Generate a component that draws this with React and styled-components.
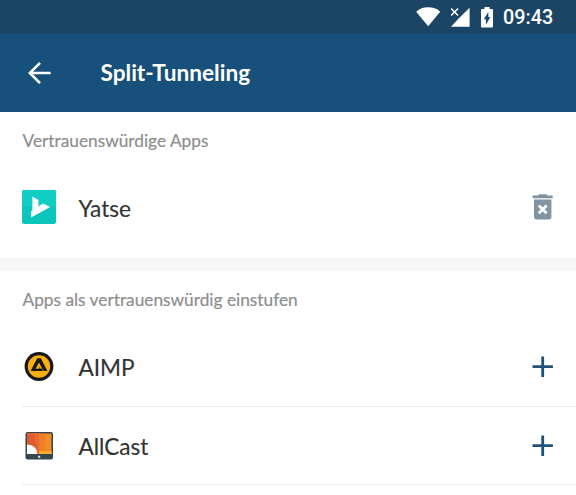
import styled, { createGlobalStyle } from "styled-components";

const GlobalStyle = createGlobalStyle`
  * {
    box-sizing: border-box;
  }
  body {
    margin: 0;
    background-color: #fff;
    font-family: Lato, "Liberation Sans", sans-serif;
  }
`;

const Screen = styled.div`
  width: 576px;
  height: 495px;
  overflow: hidden;
  background-color: #fff;
`;
const StatusBar = styled.div`
  height: 34px;
  padding-right: 23px;
  display: flex;
  align-items: center;
  justify-content: flex-end;
  background-color: #1b4564;
  color: #fff;
`;
const StatusIcons = styled.div`
  width: 77px;
  display: flex;
  align-items: center;
  justify-content: space-between;
  margin-right: 10px;
`;
const Clock = styled.span`
  width: 50px;
  padding-top: 2px;
  font-family: Roboto, sans-serif;
  font-size: 19.8px;
  font-weight: 500;
  line-height: 34px;
`;
const Header = styled.header`
  height: 78px;
  padding-left: 28px;
  display: flex;
  align-items: center;
  gap: 49.5px;
  background-color: #17507a;
  color: #fff;
`;
const Title = styled.h1`
  margin: 0;
  font-size: 22.6px;
  font-weight: 700;
  line-height: 28px;
`;
const Section = styled.section`
  height: ${(props) => props.$height || "auto"};
  padding-left: 22px;
`;
const SectionTitle = styled.h2`
  margin: 0;
  height: 57px;
  padding-left: 0.5px;
  color: #8e8e8e;
  font-size: 17.3px;
  font-weight: 400;
  line-height: 57px;
  -webkit-text-stroke: 0.2px #8e8e8e;
`;
const Row = styled.div`
  height: ${(props) => props.$height};
  padding-right: 22px;
  display: flex;
  align-items: center;
  border-bottom: ${(props) => (props.$divided ? "1px solid #ebebeb" : "none")};
`;
const AppIcon = styled.div`
  width: 34px;
  height: 34px;
  margin-right: 22.5px;
  flex: none;

  svg {
    display: block;
  }
`;
const AppName = styled.span`
  flex: 1;
  padding-top: ${(props) => props.$offset || "2px"};
  color: #333;
  font-size: 22.6px;
  line-height: 30px;
  -webkit-text-stroke: 0.15px #333;
`;
const Action = styled.button`
  width: 22px;
  height: 28px;
  padding: 0;
  display: flex;
  align-items: center;
  justify-content: center;
  border: none;
  background: none;
`;
const Spacer = styled.div`
  height: 13px;
  background: linear-gradient(#f5f5f5, #f8f8f8);
`;

const WifiIcon = () => (
  <svg width="24" height="20" viewBox="0 0 24 20" fill="#fff">
    <path d="M.2 4.7Q5 .3 12.2 .3t12 4.4L12.2 19.3Z" />
  </svg>
);

const SignalIcon = () => (
  <svg width="20" height="20" viewBox="1 0 20 20">
    <path d="M19.6.8v19H.9l7.7-8.2Z" fill="#fff" />
    <path d="M1.1 1.5l7 7M8.1 1.5l-7 7" stroke="#fff" strokeWidth="1.4" />
  </svg>
);

const BatteryIcon = () => (
  <svg width="12" height="21" viewBox="0 0 12 21">
    <path
      d="M3.5 0h5v2H11q1 0 1 1v16.5q0 1-1 1H1q-1 0-1-1V3q0-1 1-1h2.5Z"
      fill="#fff"
    />
    <path d="M7.3 5v5h2L4.9 17.8v-5.5H2.8Z" fill="#1b4564" />
  </svg>
);

const BackIcon = () => (
  <svg
    width="23"
    height="23"
    viewBox="0 0 23 23"
    fill="none"
    stroke="#fff"
    strokeWidth="2.6"
  >
    <path d="M12 .9 1.8 11 12 21.1M1.8 11h20.8" />
  </svg>
);

const YatseIcon = () => (
  <svg width="34" height="34" viewBox="0 0 34 34">
    <rect width="34" height="34" rx="2.2" fill="#0bc6bd" />
    <path d="M2.2 0h29.6Q34 0 34 2.2V16H0V2.2Q0 0 2.2 0Z" fill="#12cdc4" />
    <path
      d="M10.4 6.5l6 3.5v6.5l4.4-3 7.5 3.6L9 27.5v-6.3l1.4-.8Z"
      fill="#fff"
    />
  </svg>
);

const AimpIcon = () => (
  <svg width="34" height="34" viewBox="0 0 34 34">
    <circle cx="17" cy="16.5" r="14.4" fill="#171819" />
    <circle cx="17" cy="16.5" r="11.2" fill="#fbae12" />
    <path d="M15.2 8.2h3.6L25.4 21h-3.6l-1.2-2.4.2 2.4H8.6Z" fill="#171819" />
    <path d="M17 12.6l3.2 6.1h-1.6l-1-1.9-.4 1.9h-3.6Z" fill="#fbae12" />
  </svg>
);

const AllCastIcon = () => (
  <svg width="34" height="34" viewBox="0 0 34 34">
    <rect x="3.5" y="3" width="27.5" height="27.5" rx="2" fill="#34454d" />
    <path d="M5 4.5h24.5V25H5Z" fill="#f28c24" />
    <path d="M5 4.5h18V25H5Z" fill="#ef7d2a" />
    <path d="M5 4.5h12V25H5Z" fill="#e9682e" />
    <path d="M5 4.5h6.3l3.4 13L13 25H5Z" fill="#df5b30" />
    <path d="M17 22h12.5v3h-12Z" fill="#ffad26" />
    <path d="M5 15.5q10 .5 10.3 9.5H5Z" fill="#fff" />
    <rect x="16.2" y="26.8" width="2" height="1.9" fill="#fff" />
  </svg>
);

const TrashIcon = () => (
  <svg width="22" height="26" viewBox="-.7 0 22 26">
    <path
      d="M0 1.4h5.4L6.5.2h7l1.1 1.2H20v2.8H0ZM1.3 5.6h17.4v17.2q0 2.7-2.7 2.7H4q-2.7 0-2.7-2.7Z"
      fill="#8094a2"
    />
    <path
      d="M6.1 11.5l7.8 7.8M13.9 11.5l-7.8 7.8"
      stroke="#fff"
      strokeWidth="2.9"
    />
  </svg>
);

const PlusIcon = () => (
  <svg width="22" height="22" viewBox="0 0 22 22">
    <path d="M10.7.5v20.4M.5 10.7h20.4" stroke="#1c527b" strokeWidth="2.8" />
  </svg>
);

const apps = [
  { name: "AIMP", Icon: AimpIcon, height: "79px" },
  { name: "AllCast", Icon: AllCastIcon, height: "78px" },
];

const App = () => {
  return (
    <Screen>
      <GlobalStyle />
      <StatusBar>
        <StatusIcons>
          <WifiIcon />
          <SignalIcon />
          <BatteryIcon />
        </StatusIcons>
        <Clock>09:43</Clock>
      </StatusBar>
      <Header>
        <BackIcon />
        <Title>Split-Tunneling</Title>
      </Header>
      <Section $height="146px">
        <SectionTitle>Vertrauenswürdige Apps</SectionTitle>
        <Row $height="76px">
          <AppIcon>
            <YatseIcon />
          </AppIcon>
          <AppName $offset="4px">Yatse</AppName>
          <Action>
            <TrashIcon />
          </Action>
        </Row>
      </Section>
      <Spacer />
      <Section>
        <SectionTitle>Apps als vertrauenswürdig einstufen</SectionTitle>
        {apps.map(({ name, Icon, height }) => (
          <Row key={name} $height={height} $divided>
            <AppIcon>
              <Icon />
            </AppIcon>
            <AppName>{name}</AppName>
            <Action>
              <PlusIcon />
            </Action>
          </Row>
        ))}
      </Section>
    </Screen>
  );
};

export default App;
